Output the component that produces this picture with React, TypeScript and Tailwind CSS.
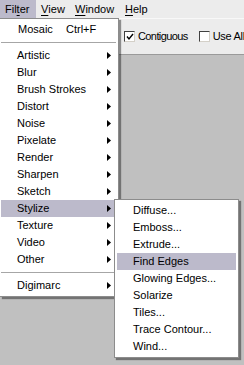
import type { ReactNode } from "react";

const filterItems = [
  "Artistic",
  "Blur",
  "Brush Strokes",
  "Distort",
  "Noise",
  "Pixelate",
  "Render",
  "Sharpen",
  "Sketch",
  "Stylize",
  "Texture",
  "Video",
  "Other",
];

const stylizeItems = [
  "Diffuse...",
  "Emboss...",
  "Extrude...",
  "Find Edges",
  "Glowing Edges...",
  "Solarize",
  "Tiles...",
  "Trace Contour...",
  "Wind...",
];

function Arrow() {
  return (
    <svg width="4" height="7" viewBox="0 0 4 7" className="shrink-0">
      <polygon points="0,0 4,3.5 0,7" fill="#000" />
    </svg>
  );
}

function Row({ children, active, arrow }: { children: ReactNode; active?: boolean; arrow?: boolean }) {
  return (
    <div className={`flex h-[17px] items-center justify-between pl-[16px] pr-[5px] ${active ? "bg-[#bcbacb]" : ""}`}>
      <span className="whitespace-nowrap">{children}</span>
      {arrow && <Arrow />}
    </div>
  );
}

function Separator() {
  return (
    <div className="h-[9px] pt-[4px]">
      <div className="h-px bg-[#a6a6a6]" />
    </div>
  );
}

function Checkbox({ checked }: { checked?: boolean }) {
  return (
    <span className="flex h-[11px] w-[11px] shrink-0 items-center justify-center border border-t-[#404040] border-l-[#404040] border-r-[#d4d0c8] border-b-[#d4d0c8] bg-white">
      {checked && (
        <svg width="8" height="8" viewBox="0 0 8 8">
          <polyline points="1,3.5 3,6 7,1" fill="none" stroke="#000" strokeWidth="1.4" />
        </svg>
      )}
    </span>
  );
}

export default function App() {
  return (
    <div
      className="relative h-[365px] w-[244px] overflow-hidden bg-[#c0c0c0] text-[11px] leading-none text-black"
      style={{ fontFamily: '"Liberation Sans", Arial, sans-serif' }}
    >
      {/* Menu bar */}
      <div className="flex h-[18px] items-center bg-[#ececec]">
        <div className="flex h-full w-[36px] items-center bg-[#bcbacb] pl-[5px]">
          Fil<span className="underline underline-offset-2">t</span>er
        </div>
        <div className="flex h-full w-[34px] items-center pl-[5px]">
          <span className="underline underline-offset-2">V</span>iew
        </div>
        <div className="flex h-full w-[50px] items-center pl-[5px]">
          <span className="underline underline-offset-2">W</span>indow
        </div>
        <div className="flex h-full items-center pl-[5px]">
          <span className="underline underline-offset-2">H</span>elp
        </div>
      </div>

      {/* Options bar */}
      <div className="flex h-[37px] items-center overflow-hidden border-t border-b border-t-[#f8f8f8] border-b-[#9a9a9a] bg-[#ececec] pl-[124px]">
        <Checkbox checked />
        <span className="ml-[3px] whitespace-nowrap tracking-[-0.6px]">Contiguous</span>
        <span className="ml-[11px]">
          <Checkbox />
        </span>
        <span className="ml-[3px] whitespace-nowrap tracking-[-0.3px]">Use All L</span>
      </div>

      {/* Filter menu */}
      <div className="absolute left-0 top-[18px] w-[119px] border border-l-0 border-[#8c8c8c] bg-white py-[2px] pr-[2px] pl-[1px] shadow-[2px_2px_1px_rgba(0,0,0,0.4)]">
        <div className="flex h-[17px] items-center pl-[17px]">
          <span className="w-[48px]">Mosaic</span>
          <span>Ctrl+F</span>
        </div>
        <Separator />
        {filterItems.map((item) => (
          <Row key={item} arrow active={item === "Stylize"}>
            {item}
          </Row>
        ))}
        <Separator />
        <Row arrow>Digimarc</Row>
      </div>

      {/* Stylize submenu */}
      <div className="absolute left-[114px] top-[199px] w-[125px] border border-[#8c8c8c] bg-white px-[2px] py-[2px] shadow-[2px_2px_1px_rgba(0,0,0,0.4)]">
        {stylizeItems.map((item) => (
          <Row key={item} active={item === "Find Edges"}>
            {item}
          </Row>
        ))}
      </div>
    </div>
  );
}
